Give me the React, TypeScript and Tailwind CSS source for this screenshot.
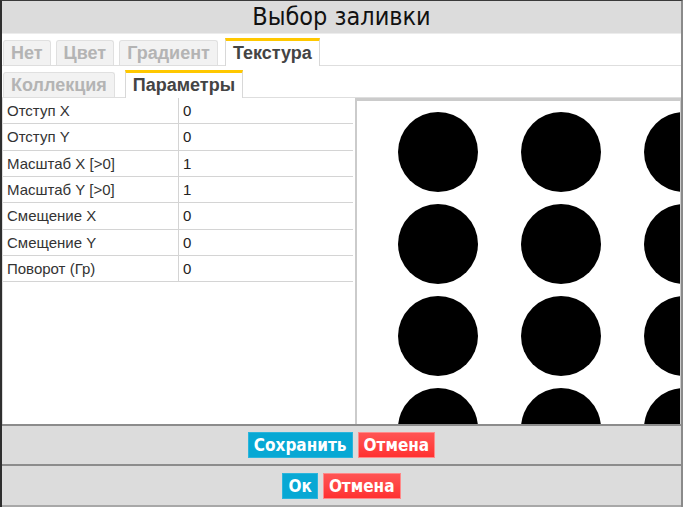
import React from "react";

const params: [string, string][] = [
  ["Отступ X", "0"],
  ["Отступ Y", "0"],
  ["Масштаб X [>0]", "1"],
  ["Масштаб Y [>0]", "1"],
  ["Смещение X", "0"],
  ["Смещение Y", "0"],
  ["Поворот (Гр)", "0"],
];

const narrow = { fontFamily: '"Liberation Sans Narrow", "DejaVu Sans Condensed", "Liberation Sans", sans-serif' };
const sans = { fontFamily: '"Liberation Sans", Arial, sans-serif' };

function Tab({ label, active }: { label: string; active?: boolean }) {
  if (active) {
    return (
      <div
        className="h-[28px] px-[7px] bg-white border-t-[3px] border-t-[#ffc800] border-x border-x-[#d8d8d8] text-[18px] font-bold text-[#444] leading-[24px] -mb-px"
        style={sans}
      >
        {label}
      </div>
    );
  }
  return (
    <div
      className="h-[25px] px-[7px] bg-[#f2f2f2] border border-b-0 border-[#e0e0e0] rounded-t-[3px] text-[18px] font-bold text-[#b4b4b4] leading-[24px]"
      style={sans}
    >
      {label}
    </div>
  );
}

function Dots() {
  const xs = [81, 204, 327];
  const ys = [51, 143, 235, 327];
  return (
    <svg width="323" height="323" viewBox="0 0 323 323" className="block">
      {ys.map((y) =>
        xs.map((x) => <circle key={`${x}-${y}`} cx={x} cy={y} r={40} fill="#000" />)
      )}
    </svg>
  );
}

function Btn({ label, color }: { label: string; color: "blue" | "red" }) {
  const cls =
    color === "blue"
      ? "bg-[#07a8d4] border-[#2bb5dc]"
      : "bg-gradient-to-b from-[#ff5454] to-[#ff3030] border-[#ff8a8a]";
  return (
    <div
      className={`h-[26px] px-[5px] border ${cls} text-white font-bold text-[17px] leading-[24px]`}
      style={narrow}
    >
      {label}
    </div>
  );
}

export default function App() {
  return (
    <div className="w-[683px] h-[507px] flex flex-col bg-white border-l-2 border-l-[#2e2e2e] border-t border-t-[#3a3a3a] border-r-2 border-r-[#8a8a8a] overflow-hidden">
      <div
        className="h-[33px] shrink-0 bg-[#dcdcdc] border-b border-b-[#ececec] flex items-center justify-center text-[25px] text-[#111]"
        style={narrow}
      >
        Выбор заливки
      </div>

      <div className="h-[32px] shrink-0 flex items-end gap-[5px] pl-[1px] border-b border-b-[#dedede]">
        <Tab label="Нет" />
        <Tab label="Цвет" />
        <Tab label="Градиент" />
        <div className="ml-[2px]">
          <Tab label="Текстура" active />
        </div>
      </div>

      <div className="h-[32px] shrink-0 flex items-end gap-[10px] pl-[1px] border-b border-b-[#dedede]">
        <Tab label="Коллекция" />
        <Tab label="Параметры" active />
      </div>

      <div className="flex-1 flex min-h-0">
        <div className="w-[351px] shrink-0 border-l border-l-[#dcdcdc]" style={sans}>
          {params.map(([k, v]) => (
            <div key={k} className="h-[26.33px] flex border-b border-b-[#d4d4d4] text-[15px] leading-[25px]">
              <div className="w-[176px] shrink-0 pl-[4px] text-[#333] border-r border-r-[#d4d4d4]">{k}</div>
              <div className="pl-[4px] text-[#222]">{v}</div>
            </div>
          ))}
        </div>
        <div className="ml-[2px] flex-1 border-l-2 border-t-[3px] border-r border-[#cbcbcb] overflow-hidden">
          <Dots />
        </div>
      </div>

      <div className="h-[40px] shrink-0 bg-[#dcdcdc] border-t-2 border-t-[#8c8c8c] flex items-center justify-center gap-[5px]">
        <Btn label="Сохранить" color="blue" />
        <Btn label="Отмена" color="red" />
      </div>
      <div className="h-[43px] shrink-0 bg-[#dcdcdc] border-t-2 border-t-[#8c8c8c] border-b-2 border-b-[#a8a8a8] flex items-center justify-center gap-[5px]">
        <Btn label="Ок" color="blue" />
        <Btn label="Отмена" color="red" />
      </div>
    </div>
  );
}
